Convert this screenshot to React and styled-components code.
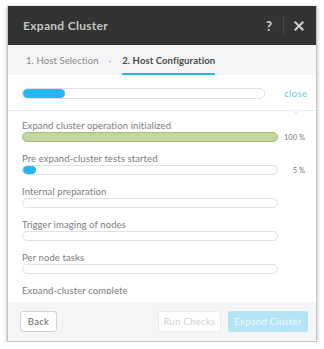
import React from 'react';
import styled, { createGlobalStyle } from 'styled-components';

const GlobalStyle = createGlobalStyle`
  body {
    margin: 0;
    background: #ffffff;
    font-family: Lato, "Open Sans", sans-serif;
  }
`;

const steps = [
  { label: 'Expand cluster operation initialized', value: 100, done: true },
  { label: 'Pre expand-cluster tests started', value: 5 },
  { label: 'Internal preparation' },
  { label: 'Trigger imaging of nodes' },
  { label: 'Per node tasks' },
  { label: 'Expand-cluster complete' },
];

function App() {
  return (
    <Page>
      <GlobalStyle />
      <Dialog>
        <Header>
          <Title>Expand Cluster</Title>
          <HeaderActions>
            <HelpIcon>?</HelpIcon>
            <HeaderDivider />
            <CloseIcon>
              <svg width="10" height="10" viewBox="0 0 10 10">
                <path d="M1.5 1.5 L8.5 8.5 M8.5 1.5 L1.5 8.5" stroke="#c9c9c9" strokeWidth="2.2" strokeLinecap="square" />
              </svg>
            </CloseIcon>
          </HeaderActions>
        </Header>
        <Tabs>
          <Tab>1. Host Selection</Tab>
          <TabDot>·</TabDot>
          <Tab active>2. Host Configuration</Tab>
        </Tabs>
        <Body>
          <Summary>
            <Track width={243} height={11}>
              <Fill color="#27b7ef" style={{ width: '42px' }} />
            </Track>
            <CloseLink>close</CloseLink>
          </Summary>
          <Separator>
            <Caret />
          </Separator>
          <StepList>
            {steps.map(step => (
              <Step key={step.label}>
                <StepLabel>{step.label}</StepLabel>
                <StepRow>
                  <Track width={256} height={10} done={step.done}>
                    {step.value && !step.done && (
                      <Fill color="#27b7ef" style={{ width: '13px' }} />
                    )}
                  </Track>
                  <Percent>{step.value ? `${step.value} %` : ''}</Percent>
                </StepRow>
              </Step>
            ))}
          </StepList>
        </Body>
        <Footer>
          <Button>Back</Button>
          <FooterRight>
            <Button disabled width={63}>Run Checks</Button>
            <PrimaryButton>Expand Cluster</PrimaryButton>
          </FooterRight>
        </Footer>
      </Dialog>
    </Page>
  );
}

export default App;

const Page = styled.div`
  padding: 6px 7px 0 7px;
  width: 324px;
  box-sizing: border-box;
`;

const Dialog = styled.div`
  width: 310px;
  border: 1px solid #c4c4c4;
  border-top: none;
  box-shadow: 0 1px 4px rgba(0, 0, 0, 0.3);
  box-sizing: border-box;
  background: #fff;
`;

const Header = styled.div`
  height: 39px;
  background: #333432;
  display: flex;
  align-items: center;
  justify-content: space-between;
  padding: 0 12px 0 15px;
`;

const Title = styled.div`
  color: #c4c4c4;
  font-size: 12px;
  font-weight: bold;
  letter-spacing: 0.3px;
`;

const HeaderActions = styled.div`
  display: flex;
  align-items: center;
`;

const HelpIcon = styled.div`
  color: #c9c9c9;
  font-size: 13px;
  font-weight: 900;
`;

const HeaderDivider = styled.div`
  width: 1px;
  height: 20px;
  background: #454644;
  margin: 0 10px 0 11px;
`;

const CloseIcon = styled.div`
  display: flex;
  width: 10px;
  height: 10px;
`;

const Tabs = styled.div`
  height: 30px;
  background: #f4f5f6;
  display: flex;
  align-items: stretch;
  padding-left: 18px;
`;

const Tab = styled.div`
  display: flex;
  align-items: center;
  font-size: 9.5px;
  letter-spacing: 0.1px;
  color: ${({ active }) => (active ? '#4a4a4a' : '#8a8a8a')};
  font-weight: ${({ active }) => (active ? 'bold' : 'normal')};
  border-bottom: 2px solid ${({ active }) => (active ? '#27b7ef' : 'transparent')};
  padding-top: 2px;
`;

const TabDot = styled.div`
  display: flex;
  align-items: center;
  color: #aaa;
  font-size: 10px;
  margin: 0 11px 0 10px;
`;

const Body = styled.div`
  height: 227px;
  display: flex;
  flex-direction: column;
  padding-bottom: 8px;
  box-sizing: border-box;
`;

const Summary = styled.div`
  display: flex;
  align-items: center;
  padding: 12px 0 0 14px;
  height: 12px;
`;

const Track = styled.div`
  width: ${({ width }) => width}px;
  height: ${({ height }) => height}px;
  border: 1px solid ${({ done }) => (done ? '#a6bb80' : '#e1e1e1')};
  background: ${({ done }) => (done ? '#c3d6a0' : '#fff')};
  border-radius: 5px;
  box-sizing: border-box;
  overflow: hidden;
  flex-shrink: 0;
`;

const Fill = styled.div`
  height: 100%;
  background: ${({ color }) => color};
  border-radius: 5px;
`;

const CloseLink = styled.div`
  margin-left: 19px;
  color: #6fcaf0;
  font-size: 10px;
  letter-spacing: 0.2px;
`;

const Separator = styled.div`
  position: relative;
  margin-top: 11px;
  height: 1px;
  background: #ebebeb;
`;

const Caret = styled.div`
  position: absolute;
  left: 285px;
  top: -3px;
  width: 5px;
  height: 5px;
  background: #fff;
  border-right: 1px solid #ebebeb;
  border-bottom: 1px solid #ebebeb;
  transform: rotate(45deg);
`;

const StepList = styled.div`
  flex: 1;
  overflow: hidden;
  padding: 8px 0 0 14px;
`;

const Step = styled.div`
  margin-bottom: 10px;
`;

const StepLabel = styled.div`
  font-size: 9.5px;
  line-height: 13px;
  color: #7c7c7c;
  letter-spacing: 0.1px;
`;

const StepRow = styled.div`
  display: flex;
  align-items: center;
`;

const Percent = styled.div`
  width: 27px;
  text-align: right;
  font-size: 7.5px;
  color: #777;
`;

const Footer = styled.div`
  height: 39px;
  background: #f4f5f6;
  display: flex;
  align-items: center;
  justify-content: space-between;
  padding: 0 8px 0 12px;
`;

const FooterRight = styled.div`
  display: flex;
  gap: 7px;
`;

const Button = styled.button`
  height: 21px;
  width: ${({ width }) => width || 37}px;
  padding: 0;
  border: 1px solid ${({ disabled }) => (disabled ? '#ebebeb' : '#d2d2d2')};
  border-radius: 3px;
  background: #fff;
  color: ${({ disabled }) => (disabled ? '#d0d0d0' : '#666')};
  font-family: Lato, sans-serif;
  font-size: 9.5px;
  letter-spacing: 0.3px;
`;

const PrimaryButton = styled.button`
  height: 21px;
  width: 80px;
  padding: 0;
  border: none;
  border-radius: 3px;
  background: #b6e4f7;
  color: #eef9fe;
  font-family: Lato, sans-serif;
  font-size: 9.5px;
  letter-spacing: 0.3px;
`;
